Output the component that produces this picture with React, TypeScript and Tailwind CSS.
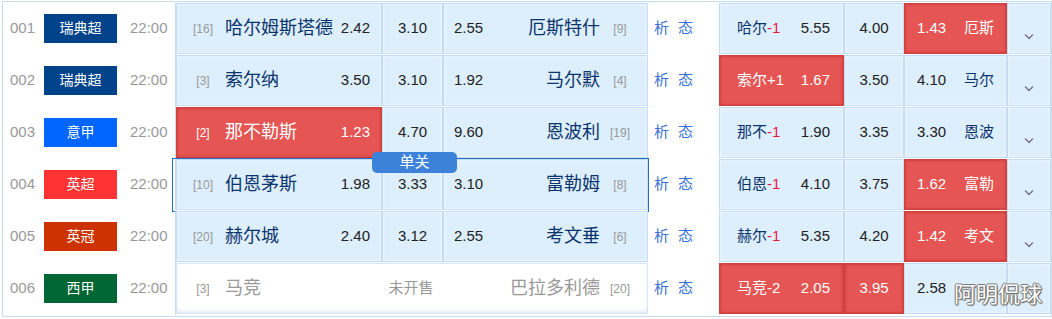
import React from 'react';

type Row = {
  no: string;
  league: string;
  lc: string;
  home: string;
  hr: string;
  away: string;
  ar: string;
  odds: string[] | null;
  red: number; // which of home/draw/away is hot in main market, -1 none
  hName: string;
  hLine: string;
  hOdds: string[];
  aName: string;
  hRed: number[];
  selected?: boolean;
};

const rows: Row[] = [
  { no: '001', league: '瑞典超', lc: 'bg-[#00438a]', home: '哈尔姆斯塔德', hr: '16', away: '厄斯特什', ar: '9', odds: ['2.42', '3.10', '2.55'], red: -1, hName: '哈尔', hLine: '-1', hOdds: ['5.55', '4.00', '1.43'], aName: '厄斯', hRed: [2] },
  { no: '002', league: '瑞典超', lc: 'bg-[#00438a]', home: '索尔纳', hr: '3', away: '马尔默', ar: '4', odds: ['3.50', '3.10', '1.92'], red: -1, hName: '索尔', hLine: '+1', hOdds: ['1.67', '3.50', '4.10'], aName: '马尔', hRed: [0] },
  { no: '003', league: '意甲', lc: 'bg-[#0066ff]', home: '那不勒斯', hr: '2', away: '恩波利', ar: '19', odds: ['1.23', '4.70', '9.60'], red: 0, hName: '那不', hLine: '-1', hOdds: ['1.90', '3.35', '3.30'], aName: '恩波', hRed: [] },
  { no: '004', league: '英超', lc: 'bg-[#ff3333]', home: '伯恩茅斯', hr: '10', away: '富勒姆', ar: '8', odds: ['1.98', '3.33', '3.10'], red: -1, hName: '伯恩', hLine: '-1', hOdds: ['4.10', '3.75', '1.62'], aName: '富勒', hRed: [2], selected: true },
  { no: '005', league: '英冠', lc: 'bg-[#cc3300]', home: '赫尔城', hr: '20', away: '考文垂', ar: '6', odds: ['2.40', '3.12', '2.55'], red: -1, hName: '赫尔', hLine: '-1', hOdds: ['5.35', '4.20', '1.42'], aName: '考文', hRed: [2] },
  { no: '006', league: '西甲', lc: 'bg-[#006633]', home: '马竞', hr: '3', away: '巴拉多利德', ar: '20', odds: null, red: -1, hName: '马竞', hLine: '-2', hOdds: ['2.05', '3.95', '2.58'], aName: '', hRed: [0, 1] },
];

const cellBase = 'h-[51px] flex items-center border';
const blue = 'bg-[#ddeefc] border-[#c4dcf3] shadow-[inset_0_0_3px_rgba(255,255,255,0.95)]';
const hot = 'bg-[#e55553] border-[#d0403f] text-white shadow-[inset_0_0_3px_rgba(150,20,20,0.55)]';

const Chevron = () => (
  <svg width="10" height="6" viewBox="0 0 10 6" fill="none">
    <path d="M1.5 1l3.5 3.5L8.5 1" stroke="#7b7391" strokeWidth="1.5" strokeLinecap="round" strokeLinejoin="round" />
  </svg>
);

export default function App() {
  return (
    <div className="w-[1052px] h-[319px] bg-white font-['Liberation_Sans','Noto_Sans_CJK_SC',sans-serif]">
      <div className="relative ml-[2px] mt-[1px] w-[1050px] border border-[#c8dcf1] pt-[1px] pb-[1px]">
        {rows.map(r => (
          <div key={r.no} className="relative flex h-[52px]">
            {/* number / league / time */}
            <div className="flex w-[173px] items-center border-r border-[#c8dcf1] pl-[7px] pb-[1px]">
              <span className="w-[34px] text-[15px] text-[#999]">{r.no}</span>
              <span className={`flex h-[29px] w-[73px] items-center justify-center text-[14px] text-white ${r.lc}`}>
                {r.league}
              </span>
              <span className="ml-[13px] text-[15px] text-[#999]">22:00</span>
            </div>

            {/* main market */}
            {r.odds ? (
              <div className="flex">
                <div className={`${cellBase} w-[206px] pl-[8px] pr-[11px] ${r.red === 0 ? hot : blue}`}>
                  <span className={`w-[36px] text-center text-[12px] ${r.red === 0 ? 'text-white' : 'text-[#999]'}`}>[{r.hr}]</span>
                  <span className={`ml-[4px] flex-1 text-[18px] ${r.red === 0 ? 'text-white' : 'text-[#0a346c]'}`}>{r.home}</span>
                  <span className={`text-[15px] ${r.red === 0 ? 'text-white' : 'text-[#222]'}`}>{r.odds[0]}</span>
                </div>
                <div className={`${cellBase} w-[61px] justify-center text-[15px] text-[#222] ${blue}`}>{r.odds[1]}</div>
                <div className={`${cellBase} w-[205px] pl-[10px] pr-[11px] ${blue}`}>
                  <span className="text-[15px] text-[#222]">{r.odds[2]}</span>
                  <span className="mr-[4px] flex-1 text-right text-[18px] text-[#0a346c]">{r.away}</span>
                  <span className="w-[32px] text-center text-[12px] text-[#999]">[{r.ar}]</span>
                </div>
              </div>
            ) : (
              <div className="flex h-[51px] w-[472px] items-center border border-[#d6e6f6] bg-white pl-[8px] pr-[11px] shadow-[inset_0_-2px_3px_rgba(200,220,240,0.5)]">
                <span className="w-[36px] text-center text-[12px] text-[#999]">[{r.hr}]</span>
                <span className="ml-[4px] w-[162px] text-[18px] text-[#999]">{r.home}</span>
                <span className="w-[48px] text-center text-[15px] text-[#999]">未开售</span>
                <span className="mr-[4px] flex-1 text-right text-[18px] text-[#999]">{r.away}</span>
                <span className="w-[32px] text-center text-[12px] text-[#999]">[{r.ar}]</span>
              </div>
            )}

            {/* analysis links */}
            <div className="flex w-[71px] items-center gap-[9px] pb-[1px] pl-[6px] text-[15px] text-[#3b72da]">
              <span>析</span>
              <span>态</span>
            </div>

            {/* handicap market */}
            <div className={`${cellBase} w-[125px] justify-between pl-[17px] pr-[13px] text-[15px] ${r.hRed.includes(0) ? hot : blue}`}>
              <span className={r.hRed.includes(0) ? 'text-white' : 'text-[#0a346c]'}>
                {r.hName}
                <span className={r.hRed.includes(0) ? 'text-white' : 'text-[#e8173f]'}>{r.hLine}</span>
              </span>
              <span className={r.hRed.includes(0) ? 'text-white' : 'text-[#222]'}>{r.hOdds[0]}</span>
            </div>
            <div className={`${cellBase} w-[60px] justify-center text-[15px] ${r.hRed.includes(1) ? hot : `${blue} text-[#222]`}`}>
              {r.hOdds[1]}
            </div>
            <div className={`${cellBase} w-[103px] justify-between pl-[12px] pr-[12px] text-[15px] ${r.hRed.includes(2) ? hot : blue}`}>
              <span className={r.hRed.includes(2) ? 'text-white' : 'text-[#222]'}>{r.hOdds[2]}</span>
              <span className={r.hRed.includes(2) ? 'text-white' : 'text-[#0a346c]'}>{r.aName}</span>
            </div>
            <div className={`h-[51px] w-[44px] border ${blue} flex items-start justify-center pt-[30px]`}>
              {r.aName && <Chevron />}
            </div>

            {r.selected && (
              <>
                <div className="pointer-events-none absolute left-[169px] top-[-1px] h-[54px] w-[477px] border border-[#2270c2]" />
                <div className="absolute left-[369px] top-[-7px] z-10 flex h-[21px] w-[85px] items-center justify-center rounded-[5px] bg-[#3d82d9] text-[15px] text-white">
                  单关
                </div>
              </>
            )}
          </div>
        ))}
        <div className="absolute right-[9px] bottom-[5px] text-[22px] text-white [text-shadow:1px_0_0_#777,-1px_0_0_#777,0_1px_0_#777,0_-1px_0_#777,1px_1px_1px_#555]">
          阿明侃球
        </div>
      </div>
    </div>
  );
}
